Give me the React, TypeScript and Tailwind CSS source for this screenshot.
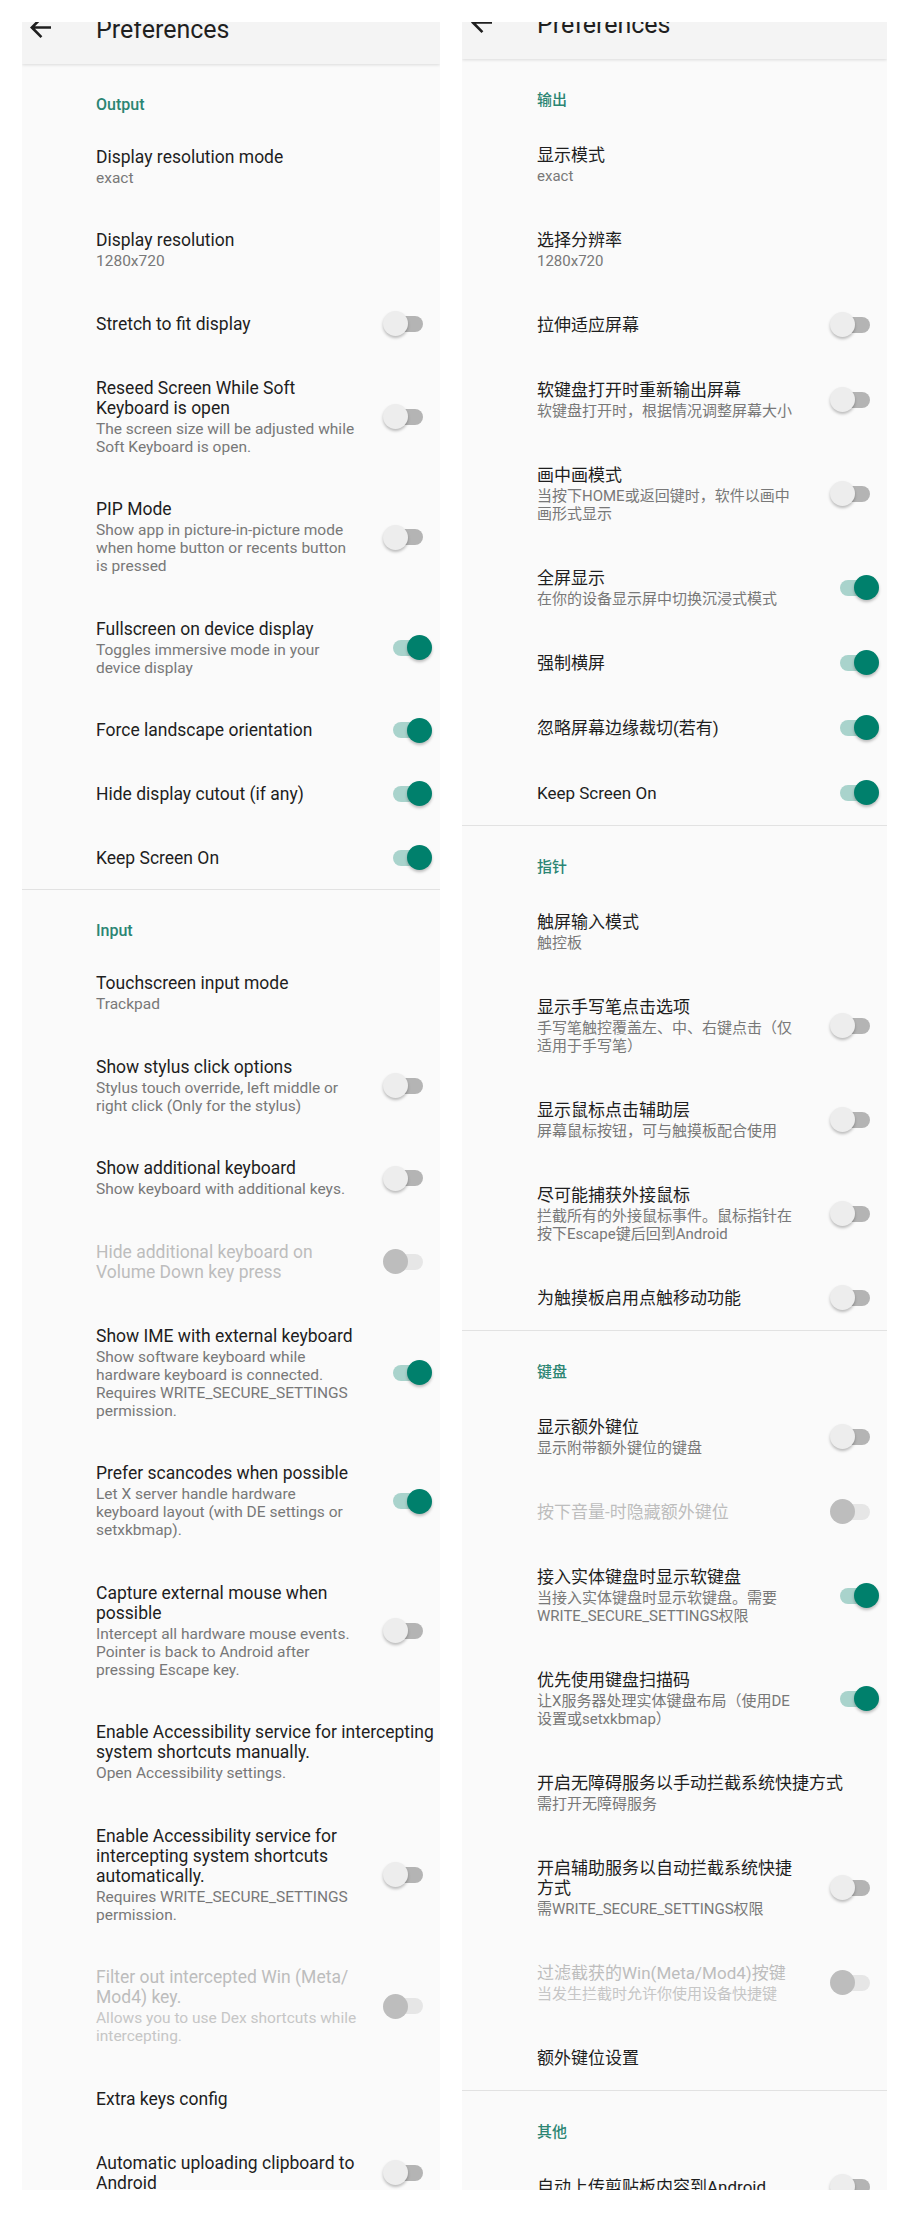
import React from "react";

type Item = { t: string; s?: string; sw?: boolean; dis?: boolean };
type Section = { h: string; items: Item[] };

const english: Section[] = [
  {
    h: "Output",
    items: [
      { t: "Display resolution mode", s: "exact" },
      { t: "Display resolution", s: "1280x720" },
      { t: "Stretch to fit display", sw: false },
      { t: "Reseed Screen While Soft\nKeyboard is open", s: "The screen size will be adjusted while\nSoft Keyboard is open.", sw: false },
      { t: "PIP Mode", s: "Show app in picture-in-picture mode\nwhen home button or recents button\nis pressed", sw: false },
      { t: "Fullscreen on device display", s: "Toggles immersive mode in your\ndevice display", sw: true },
      { t: "Force landscape orientation", sw: true },
      { t: "Hide display cutout (if any)", sw: true },
      { t: "Keep Screen On", sw: true },
    ],
  },
  {
    h: "Input",
    items: [
      { t: "Touchscreen input mode", s: "Trackpad" },
      { t: "Show stylus click options", s: "Stylus touch override, left middle or\nright click (Only for the stylus)", sw: false },
      { t: "Show additional keyboard", s: "Show keyboard with additional keys.", sw: false },
      { t: "Hide additional keyboard on\nVolume Down key press", sw: false, dis: true },
      { t: "Show IME with external keyboard", s: "Show software keyboard while\nhardware keyboard is connected.\nRequires WRITE_SECURE_SETTINGS\npermission.", sw: true },
      { t: "Prefer scancodes when possible", s: "Let X server handle hardware\nkeyboard layout (with DE settings or\nsetxkbmap).", sw: true },
      { t: "Capture external mouse when\npossible", s: "Intercept all hardware mouse events.\nPointer is back to Android after\npressing Escape key.", sw: false },
      { t: "Enable Accessibility service for intercepting\nsystem shortcuts manually.", s: "Open Accessibility settings." },
      { t: "Enable Accessibility service for\nintercepting system shortcuts\nautomatically.", s: "Requires WRITE_SECURE_SETTINGS\npermission.", sw: false },
      { t: "Filter out intercepted Win (Meta/\nMod4) key.", s: "Allows you to use Dex shortcuts while\nintercepting.", sw: false, dis: true },
      { t: "Extra keys config" },
      { t: "Automatic uploading clipboard to\nAndroid", sw: false },
    ],
  },
];

const chinese: Section[] = [
  {
    h: "输出",
    items: [
      { t: "显示模式", s: "exact" },
      { t: "选择分辨率", s: "1280x720" },
      { t: "拉伸适应屏幕", sw: false },
      { t: "软键盘打开时重新输出屏幕", s: "软键盘打开时，根据情况调整屏幕大小", sw: false },
      { t: "画中画模式", s: "当按下HOME或返回键时，软件以画中\n画形式显示", sw: false },
      { t: "全屏显示", s: "在你的设备显示屏中切换沉浸式模式", sw: true },
      { t: "强制横屏", sw: true },
      { t: "忽略屏幕边缘裁切(若有)", sw: true },
      { t: "Keep Screen On", sw: true },
    ],
  },
  {
    h: "指针",
    items: [
      { t: "触屏输入模式", s: "触控板" },
      { t: "显示手写笔点击选项", s: "手写笔触控覆盖左、中、右键点击（仅\n适用于手写笔）", sw: false },
      { t: "显示鼠标点击辅助层", s: "屏幕鼠标按钮，可与触摸板配合使用", sw: false },
      { t: "尽可能捕获外接鼠标", s: "拦截所有的外接鼠标事件。鼠标指针在\n按下Escape键后回到Android", sw: false },
      { t: "为触摸板启用点触移动功能", sw: false },
    ],
  },
  {
    h: "键盘",
    items: [
      { t: "显示额外键位", s: "显示附带额外键位的键盘", sw: false },
      { t: "按下音量-时隐藏额外键位", sw: false, dis: true },
      { t: "接入实体键盘时显示软键盘", s: "当接入实体键盘时显示软键盘。需要\nWRITE_SECURE_SETTINGS权限", sw: true },
      { t: "优先使用键盘扫描码", s: "让X服务器处理实体键盘布局（使用DE\n设置或setxkbmap）", sw: true },
      { t: "开启无障碍服务以手动拦截系统快捷方式", s: "需打开无障碍服务" },
      { t: "开启辅助服务以自动拦截系统快捷\n方式", s: "需WRITE_SECURE_SETTINGS权限", sw: false },
      { t: "过滤截获的Win(Meta/Mod4)按键", s: "当发生拦截时允许你使用设备快捷键", sw: false, dis: true },
      { t: "额外键位设置" },
    ],
  },
  {
    h: "其他",
    items: [{ t: "自动上传剪贴板内容到Android", sw: false }],
  },
];

type Cfg = {
  panel: string;
  header: string;
  headerRow: string;
  arrow: string;
  titleGap: string;
  sec: string;
  row: string;
  title: string;
  sum: string;
};

const leftCfg: Cfg = {
  panel: "w-[418px]",
  header: "h-[42px]",
  headerRow: "mt-[-5px]",
  arrow: "ml-[8px]",
  titleGap: "ml-[45px]",
  sec: "pl-[74px] pt-[31px] pb-[10px] text-[16px]",
  row: "pl-[74px] pr-[8px] py-[21.8px]",
  title: "text-[17.5px] leading-[20px]",
  sum: "mt-[2px] text-[15.5px] leading-[18px]",
};

const rightCfg: Cfg = {
  panel: "w-[425px]",
  header: "h-[37px]",
  headerRow: "mt-[-10px]",
  arrow: "ml-[9px]",
  titleGap: "ml-[45px]",
  sec: "pl-[75px] pt-[31px] pb-[12px] text-[15px]",
  row: "pl-[75px] pr-[8px] py-[22.5px]",
  title: "text-[17px] leading-[20px]",
  sum: "mt-[2px] text-[15px] leading-[18px]",
};

// the switch hangs over its row a little, so it takes no extra height
const Switch = ({ on, dis }: { on: boolean; dis?: boolean }) => {
  const track = dis ? "bg-[#e6e6e6]" : on ? "bg-[#a9d3cc]" : "bg-[#b4b4b4]";
  const thumb = dis
    ? "left-0 bg-[#bdbdbd]"
    : on
    ? "left-[24px] bg-[#00806c] shadow-[0_2px_3px_rgba(0,0,0,0.25)]"
    : "left-0 bg-[#ededed] shadow-[0_2px_3px_rgba(0,0,0,0.25)]";
  return (
    <div className="relative my-[-2.5px] h-[25px] w-[49px] shrink-0">
      <div className={`absolute left-[10px] top-[4.5px] h-[16px] w-[30px] rounded-full ${track}`} />
      <div className={`absolute top-0 h-[25px] w-[25px] rounded-full ${thumb}`} />
    </div>
  );
};

const Lines = ({ text }: { text: string }) => (
  <>
    {text.split("\n").map((l, i) => (
      <div key={i} className="whitespace-nowrap">
        {l}
      </div>
    ))}
  </>
);

const BackArrow = () => (
  <svg width="21" height="21" viewBox="4 4 16 16" className="shrink-0">
    <path fill="#1f1f1f" d="M20 11H7.83l5.59-5.59L12 4l-8 8 8 8 1.41-1.41L7.83 13H20v-2z" />
  </svg>
);

const Panel = ({ cfg, sections }: { cfg: Cfg; sections: Section[] }) => (
  <div className={`${cfg.panel} h-[2168px] shrink-0 overflow-hidden bg-[#fafafa]`}>
    <div className={`${cfg.header} relative z-10 overflow-hidden bg-[#f4f4f4] shadow-[0_1px_3px_rgba(0,0,0,0.13)]`}>
      <div className={`flex items-start ${cfg.headerRow}`}>
        <div className={cfg.arrow}>
          <BackArrow />
        </div>
        <span className={`${cfg.titleGap} text-[25px] leading-[26px] text-[#1f1f1f]`}>Preferences</span>
      </div>
    </div>
    {sections.map((sec, si) => (
      <div key={sec.h} className={si > 0 ? "border-t border-[#e2e2e2]" : ""}>
        <div className={`${cfg.sec} font-medium leading-[20px] text-[#2b8573]`}>{sec.h}</div>
        {sec.items.map((it) => (
          <div key={it.t} className={`${cfg.row} flex items-center`}>
            <div className="min-w-0 flex-1">
              <div className={`${cfg.title} ${it.dis ? "text-[#bdbdbd]" : "text-[#1e1e1e]"}`}>
                <Lines text={it.t} />
              </div>
              {it.s && (
                <div className={`${cfg.sum} ${it.dis ? "text-[#c6c6c6]" : "text-[#787878]"}`}>
                  <Lines text={it.s} />
                </div>
              )}
            </div>
            {it.sw !== undefined && <Switch on={it.sw} dis={it.dis} />}
          </div>
        ))}
      </div>
    ))}
  </div>
);

export default function App() {
  return (
    <div className="flex min-h-[2213px] w-[908px] gap-[22px] bg-white pl-[22px] pt-[22px] font-['Roboto','Noto_Sans_CJK_SC',sans-serif]">
      <Panel cfg={leftCfg} sections={english} />
      <Panel cfg={rightCfg} sections={chinese} />
    </div>
  );
}
